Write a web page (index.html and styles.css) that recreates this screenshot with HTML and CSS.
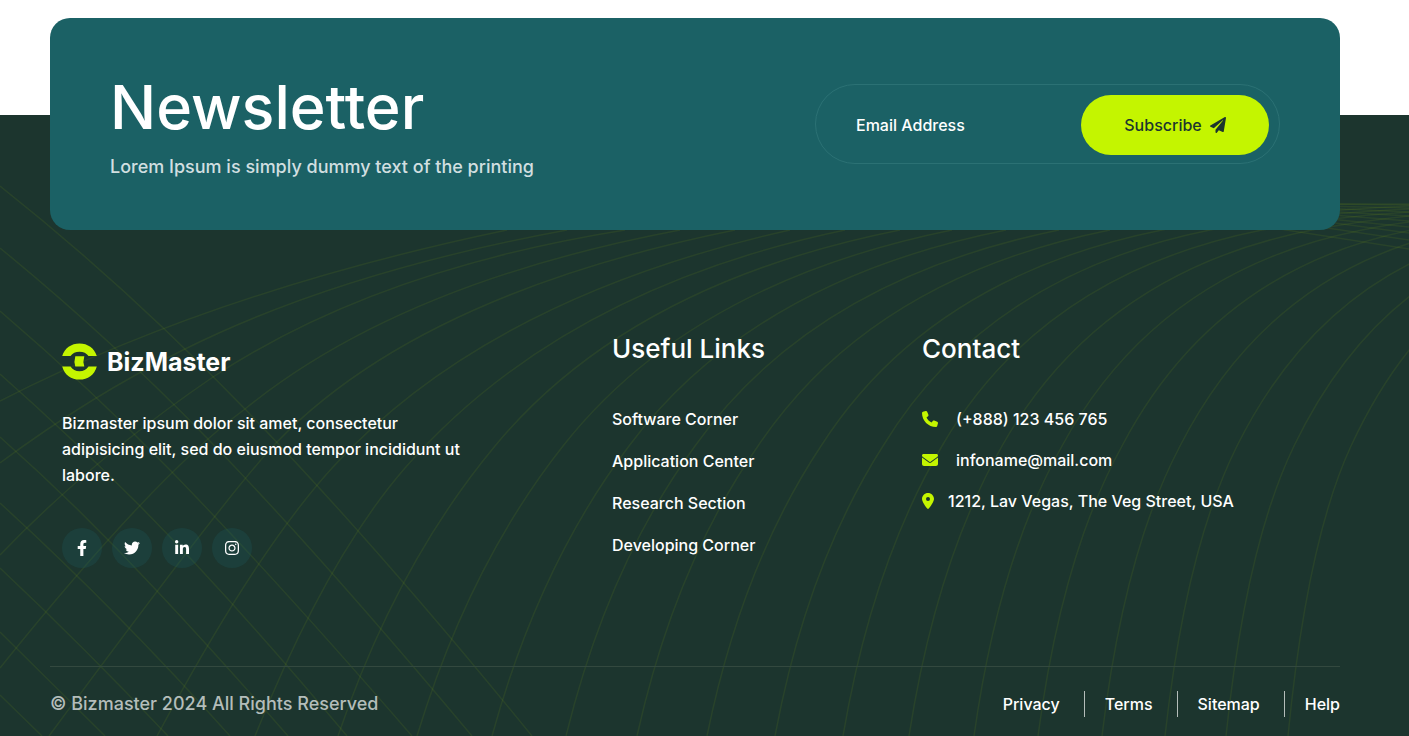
FILE: index.html
```html
<!DOCTYPE html>
<html lang="en">
<head>
<meta charset="utf-8">
<meta name="viewport" content="width=device-width, initial-scale=1">
<title>BizMaster</title>
<link rel="stylesheet" href="styles.css">
</head>
<body>
<section class="newsletter container">
  <div class="newsletter-card">
    <div class="newsletter-copy">
      <h2 class="newsletter-title">Newsletter</h2>
      <p class="newsletter-text">Lorem Ipsum is simply dummy text of the printing</p>
    </div>
    <form class="newsletter-form">
      <input class="newsletter-input" type="email" placeholder="Email Address" aria-label="Email Address">
      <button class="newsletter-button" type="submit">Subscribe
        <svg class="icon" viewBox="0 0 512 512" aria-hidden="true"><path d="M476 3.200L12.500 270.600c-18.100 10.400-15.800 35.600 2.200 43.200L121 358.400l287.300-253.200c5.500-4.900 13.300 2.600 8.600 8.300L176 407v80.500c0 23.600 28.500 32.900 42.500 15.800L282 426l124.600 52.200c14.200 6 30.400-2.900 33-18.200l72-432C515 7.800 493.300-6.800 476 3.200z"/></svg>
      </button>
    </form>
  </div>
</section>

<footer class="footer">
  <svg class="footer-grid" viewBox="0 115 1409 621" preserveAspectRatio="xMidYMin slice" aria-hidden="true">
    <path d="M0 401Q215 291 507 230"/>
    <path d="M0 463Q90 396 185 349Q340 272 567 230"/>
    <path d="M0 555Q90 461 213 377Q375 270 625 230"/>
    <path d="M0 668Q156 474 245 409Q400 283 680 230"/>
    <path d="M49 736Q230 491 277 442Q420 294 735 230"/>
    <path d="M157 736Q257 550 333 467Q487 298 790 230"/>
    <path d="M255 736Q326 559 405 468Q560 290 845 230"/>
    <path d="M338 736Q396 565 495 446Q629 284 900 230"/>
    <path d="M417 736Q469 565 563 446Q691 283 952 230"/>
    <path d="M492 736Q539 565 629 446Q752 281 1006 230"/>
    <path d="M566 736Q608 565 695 446Q813 280 1059 230"/>
    <path d="M637 736Q675 565 758 446Q871 278 1110 230"/>
    <path d="M707 736Q742 565 821 446Q929 277 1162 230Q1250 214 1409 206"/>
    <path d="M775 736Q807 565 883 446Q987 275 1210 230Q1290 215 1409 209"/>
    <path d="M843 736Q872 565 942 446Q1042 274 1262 230Q1330 217 1409 212"/>
    <path d="M909 736Q936 562 1002 446Q1100 272 1312 230Q1360 221 1409 216"/>
    <path d="M974 736Q999 558 1062 446Q1157 271 1362 230Q1385 225 1409 222"/>
    <path d="M1038 736Q1062 555 1122 446Q1215 269 1412 230"/>
    <path d="M1102 736Q1124 552 1180 446Q1271 268 1460 230"/>
    <path d="M1165 736Q1186 548 1237 446Q1326 267 1508 230"/>
    <path d="M1226 736Q1246 545 1294 446Q1381 265 1556 230"/>
    <path d="M1288 736Q1307 541 1351 446Q1435 264 1604 230"/>
    <path d="M0 186Q125 285 245 409Q375 543 532 736"/>
    <path d="M0 248Q110 338 207 438Q318 552 472 736"/>
    <path d="M0 311Q90 388 171 471Q277 580 412 736"/>
    <path d="M0 374Q70 436 138 504Q235 602 347 736"/>
    <path d="M0 437Q80 508 157 591Q218 656 288 736"/>
    <path d="M0 503Q118 611 230 736"/>
    <path d="M0 568Q86 649 168 736"/>
    <path d="M0 632L105 736"/>
    <path d="M0 695L42 736"/>
    <path d="M1260 226L1409 249"/>
    <path d="M1300 224L1409 240"/>
    <path d="M1320 221L1409 233"/>
    <path d="M1320 218L1409 227"/>
    <path d="M1320 214L1409 221"/>
    <path d="M1320 211L1409 216"/>
    <path d="M1320 208L1409 212"/>
    <path d="M1320 206L1409 208"/>
    <path d="M1320 204L1409 205"/>
    <path d="M1320 204L1409 204"/>
  </svg>

  <div class="footer-inner container">
    <div class="footer-columns">
      <div class="about">
        <a class="logo" href="#">
          <svg class="logo-mark" viewBox="0 0 35 37" aria-hidden="true">
            <path d="M.2 13C2.600 5 9.200.4 17.500.4S32.400 5 34.800 13H26.500C24.600 10.300 21.400 8.800 17.500 8.800S10.500 10.300 8.500 13z"/>
            <path d="M.2 23.500H8.500C10.500 26.700 13.600 28.200 17.500 28.200S24.600 26.700 26.500 23.500H34.800C32.400 32 25.800 36.600 17.500 36.600S2.600 32 .2 23.500z"/>
            <path d="M13.300 13.200H22.300Q20.600 18.500 22.300 23.600H13.300Q11.700 18.500 13.300 13.200z"/>
          </svg>
          <span class="logo-text">BizMaster</span>
        </a>
        <p class="about-text">Bizmaster ipsum dolor sit amet, consectetur adipisicing elit, sed do eiusmod tempor incididunt ut labore.</p>
        <div class="social">
          <a class="social-link" href="#" aria-label="Facebook"><svg class="icon" viewBox="0 0 320 512"><path d="M279.140 288l14.220-92.660h-88.910v-60.130c0-25.350 12.420-50.060 52.240-50.060h40.420V6.260S260.430 0 225.360 0c-73.220 0-121.080 44.380-121.080 124.720v70.620H22.890V288h81.390v224h100.170V288z"/></svg></a>
          <a class="social-link" href="#" aria-label="Twitter"><svg class="icon" viewBox="0 0 512 512"><path d="M459.370 151.716c.325 4.548.325 9.097.325 13.645 0 138.720-105.583 298.558-298.558 298.558-59.452 0-114.680-17.219-161.137-47.106 8.447.974 16.568 1.299 25.340 1.299 49.055 0 94.213-16.568 130.274-44.832-46.132-.975-84.792-31.188-98.112-72.772 6.498.974 12.995 1.624 19.818 1.624 9.421 0 18.843-1.300 27.614-3.573-48.081-9.747-84.143-51.980-84.143-102.985v-1.299c13.969 7.797 30.214 12.670 47.431 13.319-28.264-18.843-46.781-51.005-46.781-87.391 0-19.492 5.197-37.360 14.294-52.954 51.655 63.675 129.300 105.258 216.365 109.807-1.624-7.797-2.599-15.918-2.599-24.040 0-57.828 46.782-104.934 104.934-104.934 30.213 0 57.502 12.670 76.670 33.137 23.715-4.548 46.456-13.320 66.599-25.340-7.798 24.366-24.366 44.833-46.132 57.827 21.117-2.273 41.584-8.122 60.426-16.243-14.292 20.791-32.161 39.308-52.628 54.253z"/></svg></a>
          <a class="social-link" href="#" aria-label="LinkedIn"><svg class="icon" viewBox="0 0 448 512"><path d="M100.280 448H7.400V148.900h92.880zM53.790 108.100C24.090 108.100 0 83.500 0 53.800a53.790 53.790 0 0 1 107.580 0c0 29.700-24.100 54.300-53.790 54.300zM447.900 448h-92.680V302.400c0-34.700-.7-79.200-48.290-79.200-48.290 0-55.690 37.700-55.690 76.700V448h-92.780V148.900h89.080v40.800h1.300c12.400-23.500 42.690-48.300 87.880-48.300 94 0 111.280 61.900 111.280 142.300V448z"/></svg></a>
          <a class="social-link" href="#" aria-label="Instagram"><svg class="icon" viewBox="0 0 448 512"><path d="M224.100 141c-63.600 0-114.900 51.300-114.900 114.900s51.300 114.900 114.900 114.900S339 319.500 339 255.900 287.700 141 224.100 141zm0 189.600c-41.100 0-74.700-33.500-74.700-74.700s33.500-74.700 74.700-74.700 74.700 33.500 74.700 74.700-33.600 74.700-74.700 74.700zm146.400-194.300c0 14.900-12 26.800-26.800 26.800-14.900 0-26.800-12-26.800-26.800s12-26.800 26.800-26.800 26.800 12 26.800 26.800zm76.100 27.200c-1.700-35.900-9.900-67.700-36.200-93.900-26.200-26.200-58-34.400-93.900-36.200-37-2.100-147.900-2.100-184.900 0-35.800 1.700-67.600 9.900-93.900 36.100s-34.400 58-36.200 93.900c-2.100 37-2.100 147.900 0 184.900 1.700 35.900 9.900 67.700 36.200 93.900s58 34.400 93.900 36.200c37 2.100 147.900 2.100 184.900 0 35.900-1.700 67.700-9.900 93.900-36.200 26.200-26.200 34.400-58 36.200-93.900 2.100-37 2.100-147.800 0-184.800zM398.800 388c-7.800 19.600-22.900 34.700-42.600 42.600-29.500 11.700-99.500 9-132.100 9s-102.700 2.600-132.100-9c-19.600-7.800-34.700-22.900-42.600-42.600-11.700-29.500-9-99.500-9-132.100s-2.600-102.700 9-132.100c7.800-19.600 22.900-34.700 42.600-42.600 29.500-11.700 99.500-9 132.100-9s102.700-2.600 132.100 9c19.600 7.800 34.700 22.900 42.600 42.600 11.700 29.500 9 99.500 9 132.100s2.700 102.700-9 132.100z"/></svg></a>
        </div>
      </div>

      <nav class="links" aria-labelledby="links-title">
        <h3 class="column-title" id="links-title">Useful Links</h3>
        <ul class="link-list">
          <li><a href="#">Software Corner</a></li>
          <li><a href="#">Application Center</a></li>
          <li><a href="#">Research Section</a></li>
          <li><a href="#">Developing Corner</a></li>
        </ul>
      </nav>

      <div class="contact">
        <h3 class="column-title">Contact</h3>
        <ul class="contact-list">
          <li><a href="#"><svg class="icon" viewBox="0 0 512 512" aria-hidden="true"><path d="M164.900 24.600c-7.700-18.600-28-28.500-47.400-23.200l-88 24C12.100 30.200 0 46 0 64c0 247.400 200.600 448 448 448 18 0 33.800-12.100 38.600-29.500l24-88c5.300-19.400-4.600-39.700-23.200-47.400l-96-40c-16.300-6.800-35.200-2.100-46.300 11.600L304.700 368C234.300 334.700 177.300 277.700 144 207.300l49.300-40.300c13.700-11.200 18.400-30 11.600-46.300l-40-96z"/></svg><span>(+888) 123 456 765</span></a></li>
          <li><a href="#"><svg class="icon" viewBox="0 0 512 512" aria-hidden="true"><path d="M48 64C21.500 64 0 85.500 0 112c0 15.100 7.100 29.300 19.200 38.400L236.800 313.600c11.400 8.500 27 8.500 38.400 0L492.800 150.400c12.100-9.100 19.200-23.300 19.200-38.400 0-26.500-21.500-48-48-48H48zM0 176V384c0 35.300 28.700 64 64 64H448c35.300 0 64-28.700 64-64V176L294.400 339.200c-22.800 17.100-54 17.100-76.800 0L0 176z"/></svg><span>infoname@mail.com</span></a></li>
          <li class="contact-address"><svg class="icon" viewBox="0 0 384 512" aria-hidden="true"><path d="M215.700 499.200C267 435 384 279.400 384 192 384 86 298 0 192 0S0 86 0 192c0 87.400 117 243 168.300 307.200 12.300 15.300 35.100 15.300 47.400 0zM192 128a64 64 0 1 1 0 128 64 64 0 1 1 0-128z"/></svg><span>1212, Lav Vegas, The Veg Street, USA</span></li>
        </ul>
      </div>
    </div>

    <div class="footer-bottom">
      <p class="copyright">© Bizmaster 2024 All Rights Reserved</p>
      <ul class="legal">
        <li><a href="#">Privacy</a></li>
        <li><a href="#">Terms</a></li>
        <li><a href="#">Sitemap</a></li>
        <li><a href="#">Help</a></li>
      </ul>
    </div>
  </div>
</footer>
</body>
</html>
```
FILE: styles.css
```css
* {
  box-sizing: border-box;
}

body {
  margin: 0;
  background: #fff;
  color: #fff;
  font-family: Inter, "Liberation Sans", sans-serif;
  font-size: 16px;
  font-weight: 500;
  line-height: 26px;
}

h2, h3, p, ul {
  margin: 0;
  padding: 0;
}

ul {
  list-style: none;
}

a {
  color: inherit;
  text-decoration: none;
}

.icon {
  width: auto;
  height: 16px;
  flex: none;
  fill: currentColor;
}

.container {
  padding-left: 50px;
  padding-right: 69px;
}

/* Newsletter */
.newsletter {
  position: relative;
  z-index: 1;
  padding-top: 18px;
}

.newsletter-card {
  display: flex;
  align-items: center;
  justify-content: space-between;
  gap: 40px;
  padding: 50px 60px;
  border-radius: 20px;
  background: #1b6165;
}

.newsletter-title {
  margin-bottom: 8px;
  font-size: 61px;
  font-weight: 500;
  line-height: 78px;
}

.newsletter-text {
  color: #d1dfe0;
  font-size: 18px;
}

.newsletter-form {
  display: flex;
  align-items: center;
  flex: 0 1 465px;
  min-width: 0;
  padding: 10px 10px 8px;
  border: 1px solid #2b7174;
  border-radius: 40px;
}

.newsletter-input {
  flex: 1;
  min-width: 0;
  padding: 0 30px;
  border: 0;
  outline: 0;
  background: none;
  color: #fff;
  font: inherit;
}

.newsletter-input::placeholder {
  color: #fff;
  opacity: 1;
}

.newsletter-button {
  display: flex;
  align-items: center;
  justify-content: center;
  flex: none;
  gap: 8px;
  width: 188px;
  height: 60px;
  padding: 0;
  border: 0;
  border-radius: 30px;
  background: #c4f500;
  color: #1c352e;
  font: inherit;
}

/* Footer */
.footer {
  position: relative;
  margin-top: -115px;
  padding-top: 217px;
  background: #1c352e;
}

.footer-grid {
  position: absolute;
  inset: 0;
  width: 100%;
  height: 100%;
  fill: none;
  stroke: #c4f500;
  stroke-opacity: 0.07;
  stroke-width: 1.5;
}

.footer-inner {
  position: relative;
}

.footer-columns {
  display: grid;
  grid-template-columns: 550fr 310fr 406fr;
  padding: 0 12px 98px;
}

.logo {
  display: flex;
  align-items: center;
  gap: 10px;
  height: 36px;
  margin: 11px 0 31px;
}

.logo-mark {
  width: 35px;
  height: 37px;
  fill: #c4f500;
}

.logo-text {
  padding-top: 2px;
  font-size: 25px;
  font-weight: 700;
}

.about-text {
  max-width: 410px;
  margin-bottom: 40px;
}

.social {
  display: flex;
  gap: 10px;
}

.social-link {
  display: flex;
  align-items: center;
  justify-content: center;
  width: 40px;
  height: 40px;
  border-radius: 50%;
  background: rgba(27, 97, 101, 0.25);
}

.column-title {
  margin-bottom: 40px;
  font-size: 26px;
  font-weight: 500;
  line-height: 34px;
}

.link-list {
  display: grid;
  gap: 16px;
}

.contact-list {
  display: grid;
  gap: 15px;
}

.contact-list a,
.contact-address {
  display: flex;
  align-items: center;
  gap: 18px;
}

.contact-address {
  gap: 14px;
}

.contact-list .icon {
  color: #c4f500;
}

.footer-bottom {
  display: flex;
  align-items: center;
  justify-content: space-between;
  padding: 24px 0 19px;
  border-top: 1px solid #33493f;
}

.copyright {
  color: #b4bdba;
  font-size: 18px;
}

.legal {
  display: flex;
}

.legal li + li {
  margin-left: 24px;
  padding-left: 20px;
  border-left: 1px solid #b4bdba;
}
```
